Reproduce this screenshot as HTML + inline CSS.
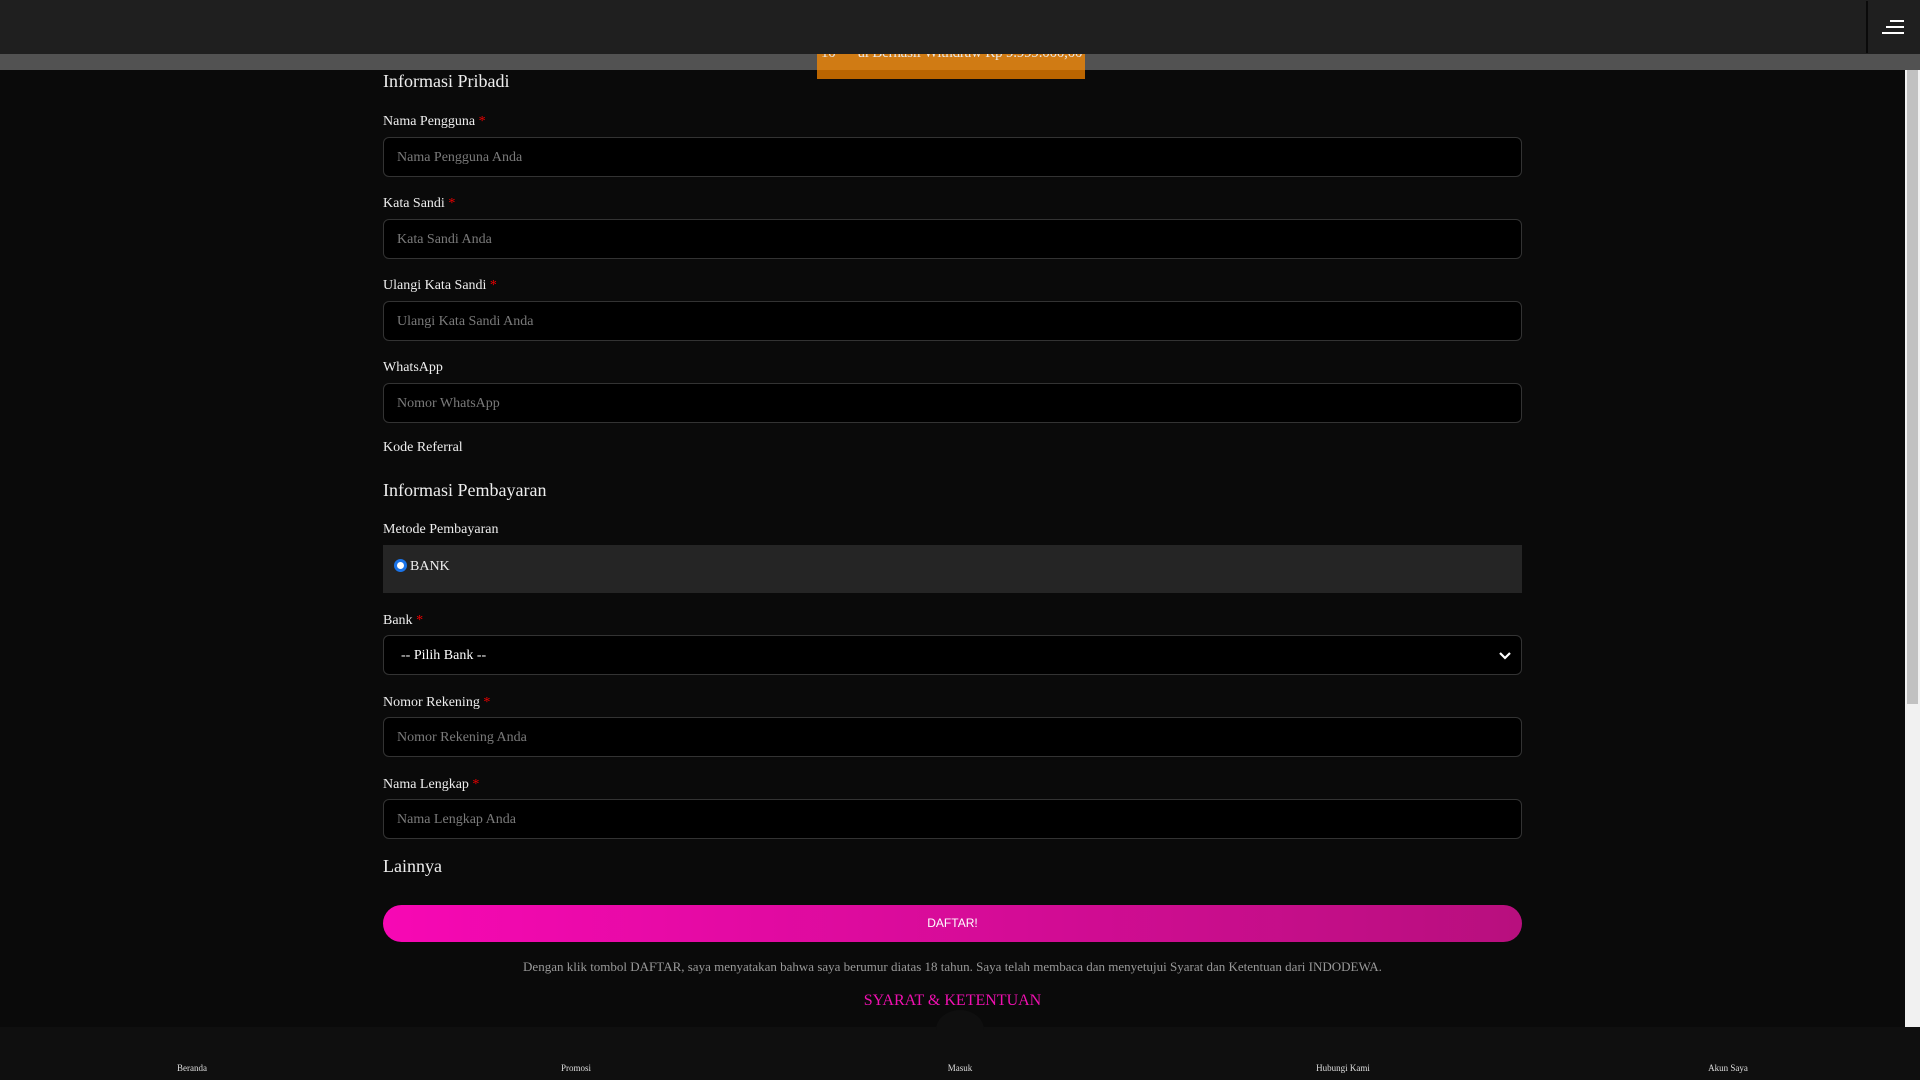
<!DOCTYPE html>
<html><head><meta charset="utf-8"><style>
*{margin:0;padding:0;box-sizing:border-box}
body{width:1920px;height:1080px;background:#0a0a0a;font-family:"Liberation Serif",serif;color:#fff;position:relative;overflow:hidden}
.a{position:absolute}
.lbl{position:absolute;left:383px;font-size:14px;color:#eee;line-height:18px}
.lbl i{color:#e00;font-style:normal}
.h{position:absolute;left:383px;font-size:18px;color:#eee;line-height:22px}
.in{position:absolute;left:383px;width:1139px;height:40px;background:#000;border:1px solid #333;border-radius:6px;font-size:14px;color:#7a7a7a;padding:11px 13px;line-height:18px}
.nav{position:absolute;top:1063px;font-size:9px;color:#ddd;width:384px;text-align:center}
</style></head><body>
<div class="a" style="left:817px;top:0;width:268px;height:70px;background:#d07b14"></div>
<div class="a" style="left:817px;top:70px;width:268px;height:9px;background:#bb6500"></div>
<div class="a" style="left:821px;top:45px;font-size:15px;color:#e8e8e8;white-space:nowrap;letter-spacing:-0.2px">10***ul Berhasil Withdraw Rp 9.999.000,00</div>
<div class="a" style="left:0;top:54px;width:817px;height:16px;background:#525252"></div>
<div class="a" style="left:1085px;top:54px;width:835px;height:16px;background:#525252"></div>
<div class="a" style="left:0;top:0;width:1920px;height:54px;background:#1f1f1f"></div>
<div class="a" style="left:1866px;top:1px;width:2px;height:52px;background:#0a0a0a"></div>
<div class="a" style="left:1890px;top:20px;width:14px;height:2px;background:#fff"></div>
<div class="a" style="left:1886px;top:26px;width:18px;height:2px;background:#fff"></div>
<div class="a" style="left:1882px;top:32px;width:22px;height:2px;background:#fff"></div>
<div class="a" style="left:1905px;top:70px;width:15px;height:957px;background:#f1f1f1"></div>
<div class="a" style="left:1907px;top:70px;width:11px;height:634px;background:#c1c1c1"></div>

<div class="h" style="top:70px">Informasi Pribadi</div>
<div class="lbl" style="top:113px">Nama Pengguna <i>*</i></div>
<div class="in" style="top:137px">Nama Pengguna Anda</div>
<div class="lbl" style="top:195px">Kata Sandi <i>*</i></div>
<div class="in" style="top:219px">Kata Sandi Anda</div>
<div class="lbl" style="top:277px">Ulangi Kata Sandi <i>*</i></div>
<div class="in" style="top:301px">Ulangi Kata Sandi Anda</div>
<div class="lbl" style="top:359px">WhatsApp</div>
<div class="in" style="top:383px">Nomor WhatsApp</div>
<div class="lbl" style="top:439px">Kode Referral</div>
<div class="h" style="top:479px">Informasi Pembayaran</div>
<div class="lbl" style="top:521px">Metode Pembayaran</div>
<div class="a" style="left:383px;top:545px;width:1139px;height:48px;background:#252525"></div>
<div class="a" style="left:394px;top:559px;width:13px;height:13px;border-radius:50%;background:#fff;border:3px solid #1a73e8"></div>
<div class="a" style="left:410px;top:559px;font-size:14px;color:#eee">BANK</div>
<div class="lbl" style="top:612px">Bank <i>*</i></div>
<div class="in" style="top:635px;color:#fff;padding-left:17px">-- Pilih Bank --
<svg class="a" style="right:10px;top:15px" width="12" height="9" viewBox="0 0 12 9"><path d="M1 2l5 5 5-5" stroke="#fff" stroke-width="2.2" fill="none"/></svg></div>
<div class="lbl" style="top:694px">Nomor Rekening <i>*</i></div>
<div class="in" style="top:717px">Nomor Rekening Anda</div>
<div class="lbl" style="top:776px">Nama Lengkap <i>*</i></div>
<div class="in" style="top:799px">Nama Lengkap Anda</div>
<div class="h" style="top:855px">Lainnya</div>
<div class="a" style="left:383px;top:905px;width:1139px;height:37px;border-radius:19px;background:linear-gradient(90deg,#f708b4,#b80f7e);font-family:'Liberation Sans',sans-serif;font-size:12px;text-align:center;line-height:37px;color:#fff">DAFTAR!</div>
<div class="a" style="left:0;top:959px;width:1905px;text-align:center;font-size:13px;color:#999">Dengan klik tombol DAFTAR, saya menyatakan bahwa saya berumur diatas 18 tahun. Saya telah membaca dan menyetujui Syarat dan Ketentuan dari INDODEWA.</div>
<div class="a" style="left:0;top:992px;width:1905px;text-align:center;font-size:16px;color:#f010b0">SYARAT &amp; KETENTUAN</div>
<div class="a" style="left:0;top:1027px;width:1920px;height:53px;background:#0f0f0f"></div>
<div class="a" style="left:936px;top:1010px;width:48px;height:40px;border-radius:50% 50% 0 0;background:#0f0f0f"></div>
<div class="nav" style="left:0">Beranda</div>
<div class="nav" style="left:384px">Promosi</div>
<div class="nav" style="left:768px">Masuk</div>
<div class="nav" style="left:1151px">Hubungi Kami</div>
<div class="nav" style="left:1536px">Akun Saya</div>
</body></html>
